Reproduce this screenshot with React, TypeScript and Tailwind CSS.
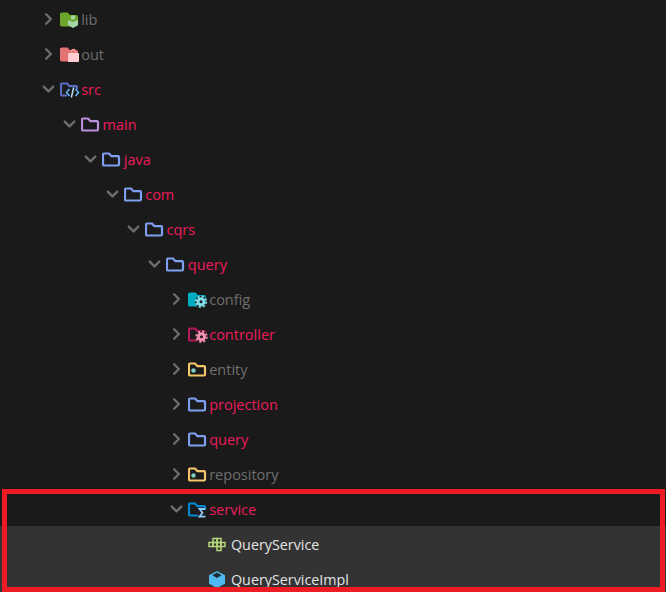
import { ChevronDown, ChevronRight } from "lucide-react";
import type { ReactNode } from "react";

const FOLDER = "M1 6.500a1 1 0 0 1 1-1h5l2.500 2.700H16a1 1 0 0 1 1 1v7.300a1 1 0 0 1-1 1H2a1 1 0 0 1-1-1z";
const BG = "#1a1a1a";

function Gear({ x, y, color }: { x: number; y: number; color: string }) {
  return (
    <g transform={`translate(${x} ${y})`}>
      <circle r="3" fill="none" stroke={color} strokeWidth="3" />
      <circle r="5.200" fill="none" stroke={color} strokeWidth="2" strokeDasharray="2.100 1.980" />
    </g>
  );
}

// folder outline, the badge goes on top as children
function Folder({ color, fill, children }: { color: string; fill?: boolean; children?: ReactNode }) {
  return (
    <svg width="20" height="21" viewBox="0 0 20 21" className="shrink-0">
      <path d={FOLDER} fill={fill ? color : BG} stroke={color} strokeWidth="2.200" strokeLinejoin="round" />
      {children}
    </svg>
  );
}

const icons: Record<string, ReactNode> = {
  lib: (
    <Folder color="#6ea62b" fill>
      <circle cx="13" cy="9.500" r="2.200" fill="#a5d6a7" />
      <path d="M8 12l5 2 5-2v5l-5 3-5-3z" fill="#a5d6a7" />
    </Folder>
  ),
  out: (
    <Folder color="#e57373" fill>
      <rect x="8" y="10" width="11" height="9" rx="1" fill="#ffcdd2" />
      <path d="M11.500 10V8.500a2 2 0 0 1 4 0V10" fill="none" stroke="#ef9a9a" strokeWidth="1.300" />
    </Folder>
  ),
  src: (
    <Folder color="#5c6bc0">
      <rect x="7" y="11" width="13" height="9" fill={BG} />
      <path d="M9.500 11l-3 3.500 3 3.500M15.500 11l3 3.500-3 3.500" fill="none" stroke="#64b5f6" strokeWidth="1.600" />
      <path d="M13.700 9.500l-2.400 10" stroke="#bbdefb" strokeWidth="1.500" />
    </Folder>
  ),
  main: <Folder color="#ba8fdc" />,
  blue: <Folder color="#7f9ff0" />,
  config: (
    <Folder color="#00acc1" fill>
      <circle cx="13" cy="13.700" r="6" fill={BG} />
      <Gear x={13} y={13.700} color="#80deea" />
    </Folder>
  ),
  controller: (
    <Folder color="#b3195a">
      <circle cx="13.500" cy="13.700" r="6" fill={BG} />
      <Gear x={13.500} y={13.700} color="#f48fb1" />
    </Folder>
  ),
  entity: (
    <Folder color="#f5c56a">
      <circle cx="5.500" cy="12.500" r="2.200" fill="#80cbc4" />
    </Folder>
  ),
  service: (
    <Folder color="#0288d1">
      <rect x="10" y="11" width="10" height="9" fill={BG} />
      <path d="M17.500 11H11.500l3 3.800-3 3.800h6" fill="none" stroke="#90caf9" strokeWidth="1.800" />
    </Folder>
  ),
  iface: (
    <svg width="20" height="21" viewBox="0 0 20 21" className="shrink-0">
      <g fill="none" stroke="#b5d77a" strokeWidth="1.500">
        <rect x="6" y="5.500" width="4" height="4" />
        <rect x="10" y="5.500" width="4" height="4" />
        <rect x="2" y="9.500" width="4" height="4" />
        <rect x="6" y="9.500" width="4" height="4" />
        <rect x="10" y="9.500" width="4" height="4" />
        <rect x="14" y="9.500" width="4" height="4" />
        <rect x="10" y="13.500" width="4" height="4" />
      </g>
    </svg>
  ),
  impl: (
    <svg width="20" height="21" viewBox="0 0 20 21" className="shrink-0">
      <path d="M10 3l8 4.300v8.500L10 20l-8-4.200V7.300z" fill="#4fb8f0" />
      <path d="M10 4.500l4.500 2.700L10 10 5.500 7.200z" fill="#1f2a33" />
    </svg>
  ),
};

const RED = "text-[#ed1b5c]";
const GREY = "text-[#6f6f6f]";

const rows = [
  { name: "lib", depth: 0, icon: "lib", open: false, color: GREY },
  { name: "out", depth: 0, icon: "out", open: false, color: GREY },
  { name: "src", depth: 0, icon: "src", open: true, color: RED },
  { name: "main", depth: 1, icon: "main", open: true, color: RED },
  { name: "java", depth: 2, icon: "blue", open: true, color: RED },
  { name: "com", depth: 3, icon: "blue", open: true, color: RED },
  { name: "cqrs", depth: 4, icon: "blue", open: true, color: RED },
  { name: "query", depth: 5, icon: "blue", open: true, color: RED },
  { name: "config", depth: 6, icon: "config", open: false, color: GREY },
  { name: "controller", depth: 6, icon: "controller", open: false, color: RED },
  { name: "entity", depth: 6, icon: "entity", open: false, color: GREY },
  { name: "projection", depth: 6, icon: "blue", open: false, color: RED },
  { name: "query", depth: 6, icon: "blue", open: false, color: RED },
  { name: "repository", depth: 6, icon: "entity", open: false, color: GREY },
  { name: "service", depth: 6, icon: "service", open: true, color: RED },
];

const indents = ["pl-[38.7px]", "pl-[60px]", "pl-[81.3px]", "pl-[102.7px]", "pl-[124px]", "pl-[145.3px]", "pl-[166.7px]"];

export default function App() {
  return (
    <div className="relative h-[592px] w-[666px] overflow-hidden bg-[#1a1a1a] pt-px font-['Open_Sans',sans-serif] text-[14.5px]">
      {rows.map((r, i) => (
        <div key={i} className={`flex h-[35px] items-center ${indents[r.depth]}`}>
          {r.open ? (
            <ChevronDown className="mr-[2px] h-[20px] w-[19px] shrink-0 text-[#6e6e6e]" strokeWidth={3} />
          ) : (
            <ChevronRight className="mr-[2px] h-[20px] w-[19px] shrink-0 text-[#6e6e6e]" strokeWidth={3} />
          )}
          {icons[r.icon]}
          <span className={`ml-[1.5px] pt-[2px] ${r.color}`}>{r.name}</span>
        </div>
      ))}
      <div className="bg-[#333333]">
        <div className="flex h-[35px] items-center pl-[207px] text-[#e4e4e4]">
          {icons.iface}
          <span className="ml-[4px] pt-[2px] text-[14.3px]">QueryService</span>
        </div>
        <div className="flex h-[35px] items-center pl-[207px] text-[#e4e4e4]">
          {icons.impl}
          <span className="ml-[4px] pt-[2px] text-[14.3px]">QueryServiceImpl</span>
        </div>
      </div>
      {/* annotation box drawn over the tree */}
      <div className="absolute left-[2px] top-[489px] h-[103px] w-[663px] border-[5px] border-[#ed1c24]" />
    </div>
  );
}
